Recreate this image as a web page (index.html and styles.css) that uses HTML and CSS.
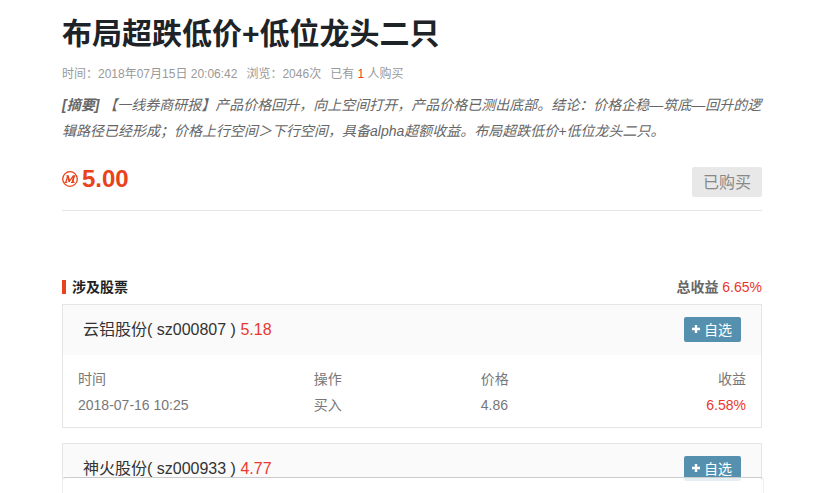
FILE: index.html
```
<!DOCTYPE html>
<html lang="zh-CN">
<head>
    <meta charset="UTF-8">
    <meta name="viewport" content="width=device-width, initial-scale=1.0">
    <title>布局超跌低价+低位龙头二只</title>
    <link rel="stylesheet" href="styles.css">
</head>
<body>
    <main class="container">
        <h1>布局超跌低价+低位龙头二只</h1>
        <p class="meta">
            <span>时间：2018年07月15日 20:06:42</span>
            <span>浏览：2046次</span>
            <span>已有 <em>1</em> 人购买</span>
        </p>
        <p class="summary"><b>[摘要]</b> 【一线券商研报】产品价格回升，向上空间打开，产品价格已测出底部。结论：价格企稳—筑底—回升的逻辑路径已经形成；价格上行空间＞下行空间，具备alpha超额收益。布局超跌低价+低位龙头二只。</p>

        <div class="buy">
            <div class="price">
                <svg class="coin" viewBox="0 0 16 16" aria-hidden="true">
                    <circle cx="8" cy="8" r="7.3" fill="none" stroke="#e8431a" stroke-width="1.3"/>
                    <path d="M2.4 11.3h2.8M3.8 11.3l2-6.4M4.4 4.8h1.6l1.5 5.3 3.8-5.3h2.2M12 4.8l-1.4 6.5M9 11.3h3.6" fill="none" stroke="#e8431a" stroke-width="1.2"/>
                    <path d="M5.8 4.8l1.4 6M12 4.8l-1.4 6.3" fill="none" stroke="#e8431a" stroke-width="1.7"/>
                </svg>
                <strong>5.00</strong>
            </div>
            <button type="button" class="bought" disabled>已购买</button>
        </div>

        <div class="section-title">
            <h2>涉及股票</h2>
            <div class="total"><b>总收益</b> <span class="red">6.65%</span></div>
        </div>

        <section class="stock">
            <div class="stock-head">
                <h3>云铝股份( sz000807 ) <span class="red">5.18</span></h3>
                <button type="button" class="add">
                    <svg viewBox="0 0 8 8" aria-hidden="true"><path d="M4 0v8M0 4h8" stroke="#fff" stroke-width="2.4"/></svg>
                    自选
                </button>
            </div>
            <table>
                <thead>
                    <tr>
                        <th class="col-time">时间</th>
                        <th class="col-action">操作</th>
                        <th class="col-price">价格</th>
                        <th class="col-profit">收益</th>
                    </tr>
                </thead>
                <tbody>
                    <tr>
                        <td>2018-07-16 10:25</td>
                        <td>买入</td>
                        <td>4.86</td>
                        <td class="col-profit red">6.58%</td>
                    </tr>
                </tbody>
            </table>
        </section>

        <section class="stock">
            <div class="stock-head">
                <h3>神火股份( sz000933 ) <span class="red">4.77</span></h3>
                <button type="button" class="add">
                    <svg viewBox="0 0 8 8" aria-hidden="true"><path d="M4 0v8M0 4h8" stroke="#fff" stroke-width="2.4"/></svg>
                    自选
                </button>
            </div>
        </section>
    </main>
    <div class="bottom-bar"></div>
</body>
</html>
```
FILE: styles.css
```
* {
    box-sizing: border-box;
}

body {
    margin: 0;
    height: 100vh;
    overflow: hidden;
    background: #fff;
    color: #666;
    font: 14px/26px "Liberation Sans", "Noto Sans CJK SC", sans-serif;
}

h1, h2, h3, p {
    margin: 0;
}

button {
    border: none;
    border-radius: 2px;
    padding: 0;
    font-family: inherit;
}

.container {
    padding: 14px 73px 0 62px;
}

h1 {
    color: #1d2327;
    font-size: 30px;
    line-height: 40px;
}

.meta {
    display: flex;
    gap: 9px;
    padding: 10px 0 8px;
    color: #999;
    font-size: 12px;
    line-height: 20px;
}

.meta em {
    color: #e8431a;
    font-style: normal;
}

.summary {
    font-style: italic;
}

.buy {
    display: flex;
    justify-content: space-between;
    align-items: flex-start;
    padding: 19px 0 13px;
    border-bottom: 1px solid #e5e5e5;
}

.price {
    display: flex;
    align-items: center;
    gap: 4px;
    height: 32px;
    color: #e8431a;
    font-size: 24px;
}

.coin {
    width: 16px;
    height: 16px;
}

.bought {
    width: 70px;
    height: 30px;
    margin-top: 4px;
    padding-bottom: 2px;
    background: #e8e8e8;
    color: #888;
    font-size: 16px;
}

.section-title {
    display: flex;
    justify-content: space-between;
    align-items: center;
    margin-top: 63px;
    padding-bottom: 4px;
}

h2 {
    padding-left: 6px;
    border-left: 4px solid #e8431a;
    color: #222;
    font-size: 14px;
    line-height: 14px;
}

.red {
    color: #e9372e;
}

.stock {
    margin-bottom: 15px;
    border: 1px solid #e5e5e5;
}

.stock-head {
    display: flex;
    justify-content: space-between;
    align-items: flex-start;
    padding: 12px 20px;
    background: #fafafa;
}

h3 {
    color: #333;
    font-size: 16px;
    font-weight: normal;
}

.add {
    display: flex;
    align-items: center;
    gap: 4px;
    width: 57px;
    height: 25px;
    padding: 0 8px 2px;
    background: #5591af;
    color: #fff;
    font-size: 14px;
    cursor: pointer;
}

.add svg {
    width: 8px;
    height: 8px;
}

table {
    width: 100%;
    padding: 11px 15px 9px;
    border-spacing: 0;
    table-layout: fixed;
    color: #777;
}

th, td {
    padding: 0;
    font-weight: normal;
    text-align: left;
}

.col-time {
    width: 35.3%;
}

.col-action {
    width: 25%;
}

.col-profit {
    text-align: right;
}

td.red {
    color: #e9372e;
}

/* bar pinned over the list */
.bottom-bar {
    position: fixed;
    right: 71px;
    bottom: 0;
    left: 62px;
    height: 16px;
    border: 1px solid #eee;
    border-top-color: #ccc;
    border-bottom: none;
    border-radius: 4px 4px 0 0;
    background: rgba(255, 255, 255, 0.85);
}
```
